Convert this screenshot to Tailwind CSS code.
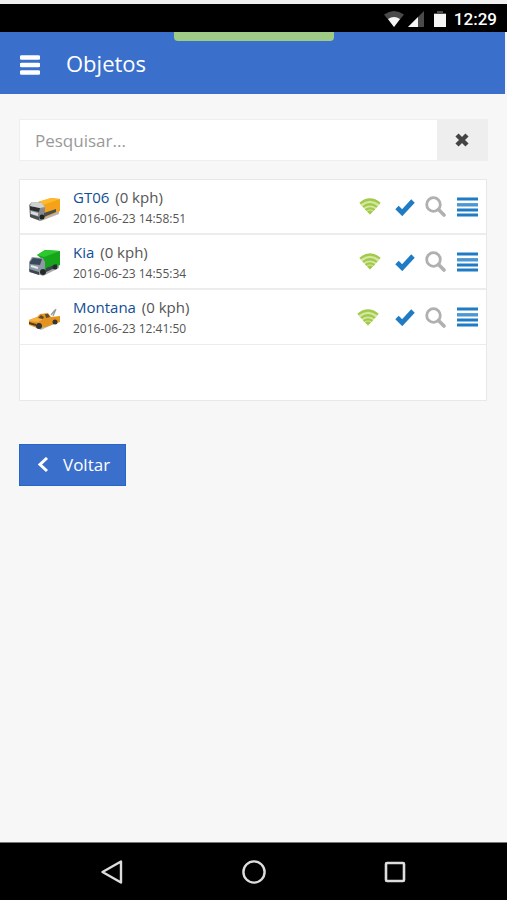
<!DOCTYPE html>
<html lang="pt-BR">
<head>
    <meta charset="UTF-8">
    <meta name="viewport" content="width=device-width, initial-scale=1.0">
    <title>Objetos</title>
    <script src="https://cdn.jsdelivr.net/npm/@tailwindcss/browser@4"></script>
</head>
<body class="bg-[#f7f7f7] font-['Open_Sans',sans-serif] text-[#555555] border-r border-white">

    <!-- Shared icons -->
    <svg class="hidden">
        <symbol id="icon-wifi" viewBox="0 0 22 17">
            <path d="M1 6q10-8.500 20 0L11 16.500z" fill="#d3e8a2"/>
            <path d="M11 16.500 8 13.500q3-2 6 0z" fill="#a3c94b"/>
            <g fill="none" stroke="#a3c94b" stroke-width="2.2">
                <path d="M1 5.500q10-8 20 0"/>
                <path d="M4 9q7-5.500 14 0"/>
                <path d="M6.500 12q4.500-3.300 9 0"/>
            </g>
        </symbol>
        <symbol id="icon-check" viewBox="0 0 20 18">
            <path d="M2 9.500 7.200 14.700 18 3" fill="none" stroke="#1f7cc4" stroke-width="4.800"/>
        </symbol>
        <symbol id="icon-search" viewBox="0 0 21 21">
            <circle cx="8.500" cy="8.500" r="6.800" fill="none" stroke="#b0b0b0" stroke-width="2.800"/>
            <path d="M13.500 13.500 19 19" fill="none" stroke="#b0b0b0" stroke-width="3.600" stroke-linecap="round"/>
        </symbol>
        <symbol id="icon-list" viewBox="0 0 21 20">
            <path d="M0 2h21M0 13h21M0 18h21" stroke="#1f7cc4" stroke-width="2.800"/>
            <path d="M0 7.800h21" stroke="#4c97d2" stroke-width="3.400"/>
        </symbol>
    </svg>

    <div class="flex min-h-screen flex-col">

        <!-- Status bar -->
        <div class="flex h-8 items-center justify-end border-t-4 border-[#f0f0f0] bg-black pr-2.5 text-white">
            <svg class="mr-1 mt-0.5 h-4 w-5" viewBox="0 0 20 16">
                <path d="M0 3.500q10-7 20 0L10 16z" fill="#4a4a4a"/>
                <path d="M4 8q6-4 12 0l-6 8z" fill="#f5f5f5"/>
            </svg>
            <svg class="mr-2.5 mt-0.5 h-4 w-4" viewBox="0 0 16 16">
                <path d="M16 0v16H0z" fill="#4a4a4a"/>
                <path d="M10 6v10H0z" fill="#f5f5f5"/>
            </svg>
            <svg class="mr-2 mt-0.5 h-4 w-3" viewBox="0 0 12 16">
                <path d="M3 0h6v2h3v2H0V2h3z" fill="#4a4a4a"/>
                <path d="M0 3h12v13H0z" fill="#f5f5f5"/>
            </svg>
            <span class="mt-0.5 font-[Roboto,sans-serif] text-[17px] font-medium leading-5">12:29</span>
        </div>

        <!-- Header -->
        <header class="relative mr-0.5 flex h-[62px] items-center bg-[#3a6fcb] pl-5 text-white">
            <div class="absolute left-1/2 top-0 ml-px h-[9px] w-40 -translate-x-1/2 rounded-b bg-[#9fcb87]"></div>
            <button type="button" aria-label="Menu" class="mr-[26px] mt-1">
                <svg class="h-5 w-5" viewBox="0 0 20 20">
                    <path d="M1.500 2.500h17M1.500 10h17M1.500 17.500h17" stroke="#ffffff" stroke-width="4.500" stroke-linecap="round"/>
                </svg>
            </button>
            <h1 class="text-[22px] leading-8">Objetos</h1>
        </header>

        <main class="flex-1 px-[19px] pt-[25px]">
            <form class="flex h-[42px] border border-[#eeeeee] bg-white">
                <input type="text" placeholder="Pesquisar..." aria-label="Pesquisar" class="min-w-0 flex-1 px-[15px] pt-0.5 text-[17px] outline-none placeholder:text-[#999999]">
                <button type="button" aria-label="Limpar" class="flex w-[50px] items-center justify-center bg-[#eeeeee]">
                    <svg class="h-3.5 w-3.5" viewBox="0 0 14 14">
                        <path d="M2 2l10 10M12 2 2 12" stroke="#444444" stroke-width="4.400"/>
                    </svg>
                </button>
            </form>

            <ul class="mr-px mt-[18px] h-[222px] border border-[#e8e8e8] bg-white">
                <li class="flex h-[55px] items-center border-b-2 border-[#ececec] pl-2 pr-2">
                    <svg class="mr-[13px] mt-1 h-8 w-8" viewBox="0 0 32 32">
                        <path d="M4 25l9 3 18-7v-3L14 22z" fill="#b5b5b5"/>
                        <path d="M10 9 23 5l9 1v12l-16 7-2-11z" fill="#f5a21b"/>
                        <path d="M10 9 23 5l9 1-17 6z" fill="#ffb92a"/>
                        <path d="M1 12l3-3 10 1 3 4v10l-5 4-10-4z" fill="#85898d"/>
                        <path d="M2 13l10 2-1 4-9-2z" fill="#2b2d31"/>
                        <path d="M4 9l10 1 3 4-5 1-10-2z" fill="#cfd2d5"/>
                        <path d="M3 18l7 2v3l-7-2z" fill="#d9dcde"/>
                        <path d="M2 21l9 3v3l-9-3zM16 20l12-4v3l-12 5z" fill="#4b4d50"/>
                        <circle cx="14" cy="24" r="2.500" fill="#222222"/>
                    </svg>
                    <div class="min-w-0 flex-1">
                        <p class="text-[15px] leading-6"><a href="#" class="mr-0.5 font-medium text-[#0f4f94]">GT06</a> (0 kph)</p>
                        <p class="text-xs leading-5">2016-06-23 14:58:51</p>
                    </div>
                    <svg class="mr-3.5 h-[17px] w-[22px]"><use href="#icon-wifi"/></svg>
                    <button type="button" aria-label="Selecionar" class="mr-2.5"><svg class="h-[18px] w-5"><use href="#icon-check"/></svg></button>
                    <button type="button" aria-label="Localizar" class="mr-[11px]"><svg class="h-[21px] w-[21px]"><use href="#icon-search"/></svg></button>
                    <button type="button" aria-label="Detalhes"><svg class="h-5 w-[21px]"><use href="#icon-list"/></svg></button>
                </li>
                <li class="flex h-[55px] items-center border-b-2 border-[#ececec] pl-2 pr-2">
                    <svg class="mr-[13px] h-8 w-8" viewBox="0 0 32 32">
                        <path d="M5 26l10 4 16-8v-3L14 24z" fill="#a8a8a8"/>
                        <path d="M9 9 17 4l15 1v14l-15 6-3-12z" fill="#17a51c"/>
                        <path d="M9 9 17 4l15 1-16 6z" fill="#2cc92e"/>
                        <path d="M1 16l3-5 11 1 2 4v9l-5 4-11-3z" fill="#8f99a3"/>
                        <path d="M2 16l3-4 9 1-2 6-10-1z" fill="#3a4a5d"/>
                        <path d="M1 23l10 3v3l-9-3zM18 22l11-4v3l-11 5z" fill="#3c4650"/>
                        <path d="M3 20l7 2" stroke="#e8ebee" stroke-width="2"/>
                        <circle cx="15" cy="26" r="3" fill="#26292c"/>
                        <circle cx="27" cy="21" r="2.500" fill="#26292c"/>
                    </svg>
                    <div class="min-w-0 flex-1">
                        <p class="text-[15px] leading-6"><a href="#" class="mr-0.5 font-medium text-[#0f4f94]">Kia</a> (0 kph)</p>
                        <p class="text-xs leading-5">2016-06-23 14:55:34</p>
                    </div>
                    <svg class="mr-3.5 h-[17px] w-[22px]"><use href="#icon-wifi"/></svg>
                    <button type="button" aria-label="Selecionar" class="mr-2.5"><svg class="h-[18px] w-5"><use href="#icon-check"/></svg></button>
                    <button type="button" aria-label="Localizar" class="mr-[11px]"><svg class="h-[21px] w-[21px]"><use href="#icon-search"/></svg></button>
                    <button type="button" aria-label="Detalhes"><svg class="h-5 w-[21px]"><use href="#icon-list"/></svg></button>
                </li>
                <li class="flex h-[55px] items-center border-b border-[#ececec] pl-2 pr-2">
                    <svg class="mr-[13px] h-8 w-8" viewBox="0 0 32 32">
                        <path d="M4 25l9 4 17-8v-2z" fill="#b8b8b8"/>
                        <path d="M23 14l4-5M25 15l3-7" stroke="#9a9a9a" stroke-width="1.300"/>
                        <path d="M1 19l8-3 3-3 8-1 3 4 9-1v6l-14 5-8 1-9-3z" fill="#e3931e"/>
                        <path d="M1 19l8-3 6 2-5 3-9-1z" fill="#f8b040"/>
                        <path d="M10 17l3-3 3 2-1 2zM17 13l3 0 2 3-4 1z" fill="#5a4b34"/>
                        <path d="M1 21l7 2v2l-7-2z" fill="#4d3c1e"/>
                        <circle cx="11" cy="25" r="3" fill="#333333"/>
                        <circle cx="27" cy="21" r="2.500" fill="#333333"/>
                    </svg>
                    <div class="min-w-0 flex-1">
                        <p class="text-[15px] leading-6"><a href="#" class="mr-0.5 font-medium text-[#0f4f94]">Montana</a> (0 kph)</p>
                        <p class="text-xs leading-5">2016-06-23 12:41:50</p>
                    </div>
                    <svg class="mr-4 h-[17px] w-[22px]"><use href="#icon-wifi"/></svg>
                    <button type="button" aria-label="Selecionar" class="mr-2.5"><svg class="h-[18px] w-5"><use href="#icon-check"/></svg></button>
                    <button type="button" aria-label="Localizar" class="mr-[11px]"><svg class="h-[21px] w-[21px]"><use href="#icon-search"/></svg></button>
                    <button type="button" aria-label="Detalhes"><svg class="h-5 w-[21px]"><use href="#icon-list"/></svg></button>
                </li>
            </ul>

            <button type="button" class="mt-[43px] flex h-[42px] items-center border border-[#2467c8] bg-[#3a6fcb] px-[15px] text-[17px] font-medium text-white">
                <svg class="mr-3 h-4 w-4" viewBox="0 0 16 16">
                    <path d="M12 1 5 7.500l7 6.500" fill="none" stroke="#ffffff" stroke-width="3"/>
                </svg>
                Voltar
            </button>
        </main>

        <!-- System navigation -->
        <nav class="flex h-[58px] items-center justify-between border-t border-[#777777] bg-black px-[100px]">
            <button type="button" aria-label="Voltar">
                <svg class="h-6 w-6" viewBox="0 0 24 24"><path d="M21 1.500v21L2.500 12z" fill="none" stroke="#dddddd" stroke-width="2.400" stroke-linejoin="round"/></svg>
            </button>
            <button type="button" aria-label="Início">
                <svg class="h-6 w-6" viewBox="0 0 24 24"><circle cx="12" cy="12" r="10.600" fill="none" stroke="#dddddd" stroke-width="2.400"/></svg>
            </button>
            <button type="button" aria-label="Recentes">
                <svg class="h-6 w-6" viewBox="0 0 24 24"><rect x="3" y="3" width="18" height="18" rx="1" fill="none" stroke="#dddddd" stroke-width="2.600"/></svg>
            </button>
        </nav>
    </div>

</body>
</html>
